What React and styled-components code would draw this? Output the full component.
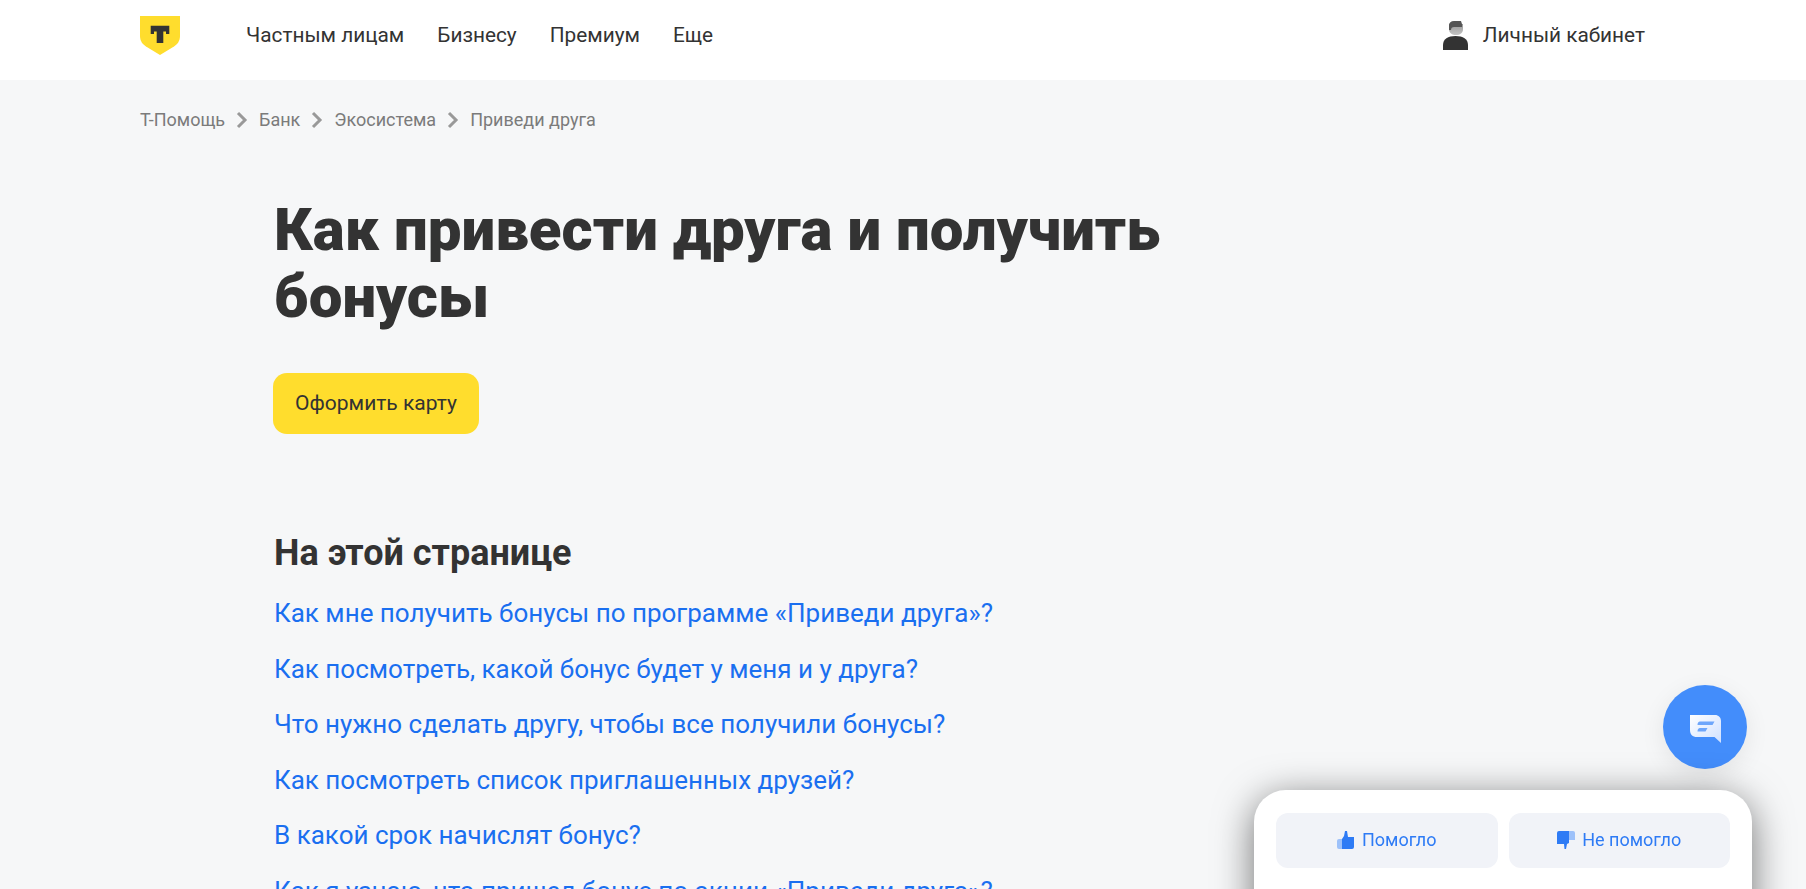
import React from "react";
import styled, { createGlobalStyle } from "styled-components";

const Global = createGlobalStyle`
  html, body { margin: 0; padding: 0; height: 889px; overflow: hidden; background: #f6f7f8; }
  body { font-family: Roboto, "Liberation Sans", sans-serif; color: #333; }
  * { box-sizing: border-box; }
`;
const Header = styled.header`
  height: 80px; background: #fff; display: flex; align-items: center;
  padding: 0 161px 8px 140px;
`;
const Logo = styled.svg`width: 40px; height: 40px; flex: none; margin-right: 66px;`;
const Nav = styled.nav`display: flex; gap: 33px; flex: 1; margin-bottom: 2px;`;
const NavItem = styled.a`font-size: 20.8px; line-height: 24px; color: #333;`;
const Account = styled.a`
  display: flex; align-items: center; gap: 15px; font-size: 20.8px; line-height: 24px; color: #333; margin-bottom: 2px;
`;
const Crumbs = styled.nav`
  display: flex; align-items: center; gap: 10px; padding: 28px 140px 0; height: 51px;
  font-size: 18px; line-height: 22px; color: #7b7b7b;
`;
const Chevron = styled.svg`width: 14px; height: 18px; flex: none;`;
const Main = styled.main`padding: 65px 0 0 274px; width: 1250px;`;
const Title = styled.h1`
  margin: 0 0 43px; font-size: 60px; line-height: 67px; font-weight: 900; color: #333; width: 950px;
`;
const Cta = styled.a`
  display: flex; align-items: center; justify-content: center; width: 206px; height: 61px; margin-left: -1px; padding-bottom: 2px;
  background: #ffdd2d; border-radius: 14px; font-size: 21px; color: #333;
`;
const SectionTitle = styled.h2`margin: 97px 0 0; font-size: 36px; line-height: 44px; font-weight: 700; color: #333;`;
const Links = styled.ul`list-style: none; margin: 11px 0 0; padding: 0; display: flex; flex-direction: column;`;
const LinkItem = styled.li`font-size: 26px; line-height: 55.5px; color: #1a6ff0;`;
const ChatButton = styled.button`
  position: fixed; left: 1663px; top: 685px; width: 84px; height: 84px; border: 0; border-radius: 50%; padding: 4px 0 0;
  background: #438dfb; box-shadow: 0 6px 24px rgba(0,0,0,.08); display: flex; align-items: center; justify-content: center;
`;
const Feedback = styled.div`
  position: fixed; left: 1254px; top: 790px; width: 498px; height: 300px; background: #fff; border-radius: 32px;
  box-shadow: 0 8px 38px rgba(0,0,0,.55); padding: 23px 22px; display: flex; gap: 11px; align-items: flex-start;
`;
const FeedbackButton = styled.button`
  flex: 1; height: 55px; border: 0; border-radius: 12px; background: #f1f3f8; color: #2e7bf5; padding: 0 0 2px;
  font: 18px Roboto, sans-serif; display: flex; align-items: center; justify-content: center; gap: 7px;
`;
const Thumb = styled.svg`width: 18px; height: 18px; flex: none;`;

const crumbs = ["Т-Помощь", "Банк", "Экосистема", "Приведи друга"];
const links = [
  "Как мне получить бонусы по программе «Приведи друга»?",
  "Как посмотреть, какой бонус будет у меня и у друга?",
  "Что нужно сделать другу, чтобы все получили бонусы?",
  "Как посмотреть список приглашенных друзей?",
  "В какой срок начислят бонус?",
  "Как я узнаю, что пришел бонус по акции «Приведи друга»?",
];

export default function App() {
  return (
    <>
      <Global />
      <Header>
        <Logo viewBox="0 0 40 40">
          <path d="M0 0h40v20c0 5-2.500 8-6 10.500L20 39 6 30.500C2.500 28 0 25 0 20z" fill="#ffdd2d" />
          <path d="M10.700 9.700H29.300V18H26V15.500H23.300V27H16.700V15.500H14V18H10.700z" fill="#333" />
        </Logo>
        <Nav>
          {["Частным лицам", "Бизнесу", "Премиум", "Еще"].map((n) => <NavItem key={n}>{n}</NavItem>)}
        </Nav>
        <Account>
          <svg width="25" height="29" viewBox="0 0 25 29">
            <defs><linearGradient id="face" x1="0" y1="0" x2="0" y2="1"><stop offset="0" stopColor="#999" /><stop offset="1" stopColor="#c4c4c4" /></linearGradient></defs>
            <path d="M6 3h14v5c0 4-3 6-7 6s-7-2-7-6z" fill="url(#face)" />
            <path d="M6 4c0-2 2-4 5-4h7l1 3v3h-8c-2 0-3 1-3 3H6z" fill="#555" />
            <path d="M0 29v-5c0-6 5-9 12.500-9S25 18 25 24v5z" fill="#333" />
          </svg>
          Личный кабинет
        </Account>
      </Header>
      <Crumbs>
        {crumbs.map((c, i) => (
          <React.Fragment key={c}>
            {i > 0 && (
              <Chevron viewBox="0 0 14 18"><path d="M3 2l7 7-7 7" fill="none" stroke="#999" strokeWidth="3" /></Chevron>
            )}
            <span>{c}</span>
          </React.Fragment>
        ))}
      </Crumbs>
      <Main>
        <Title>Как привести друга и получить бонусы</Title>
        <Cta>Оформить карту</Cta>
        <SectionTitle>На этой странице</SectionTitle>
        <Links>{links.map((l) => <LinkItem key={l}>{l}</LinkItem>)}</Links>
      </Main>
      <ChatButton aria-label="Чат">
        <svg width="31" height="28" viewBox="0 0 31 28">
          <defs><linearGradient id="bubble" x1="0" y1="0" x2="1" y2="1"><stop offset="0" stopColor="#fff" /><stop offset="1" stopColor="#cfe0ff" /></linearGradient></defs>
          <path d="M0 0h25c3.500 0 6 2.500 6 6v22l-6.500-6H7c-4.500 0-7-2.500-7-7z" fill="url(#bubble)" />
          <path d="M10 6.500h14.500l-2 3.500H7.500c0-2 1-3.500 2.500-3.500zM10 13h7.500l-2 3.500H7.500c0-2 1-3.500 2.500-3.500z" fill="#6ea6fb" />
        </svg>
      </ChatButton>
      <Feedback>
        <FeedbackButton>
          <Thumb viewBox="0 0 18 18">
            <path d="M0 10a2 2 0 0 1 2-2h3v10H2a2 2 0 0 1-2-2z" fill="#9dc1fa" />
            <path d="M5 8l2-3 1-5h2l1 6h6v10a2 2 0 0 1-2 2H5z" fill="#2e7bf5" />
          </Thumb>
          Помогло
        </FeedbackButton>
        <FeedbackButton>
          <Thumb viewBox="0 0 18 18">
            <path d="M12 0h4a2 2 0 0 1 2 2v7h-6z" fill="#9dc1fa" />
            <path d="M2 0h10v12l-2 1-1 5H7.500L7 13H0V2a2 2 0 0 1 2-2z" fill="#2e7bf5" />
          </Thumb>
          Не помогло
        </FeedbackButton>
      </Feedback>
    </>
  );
}
